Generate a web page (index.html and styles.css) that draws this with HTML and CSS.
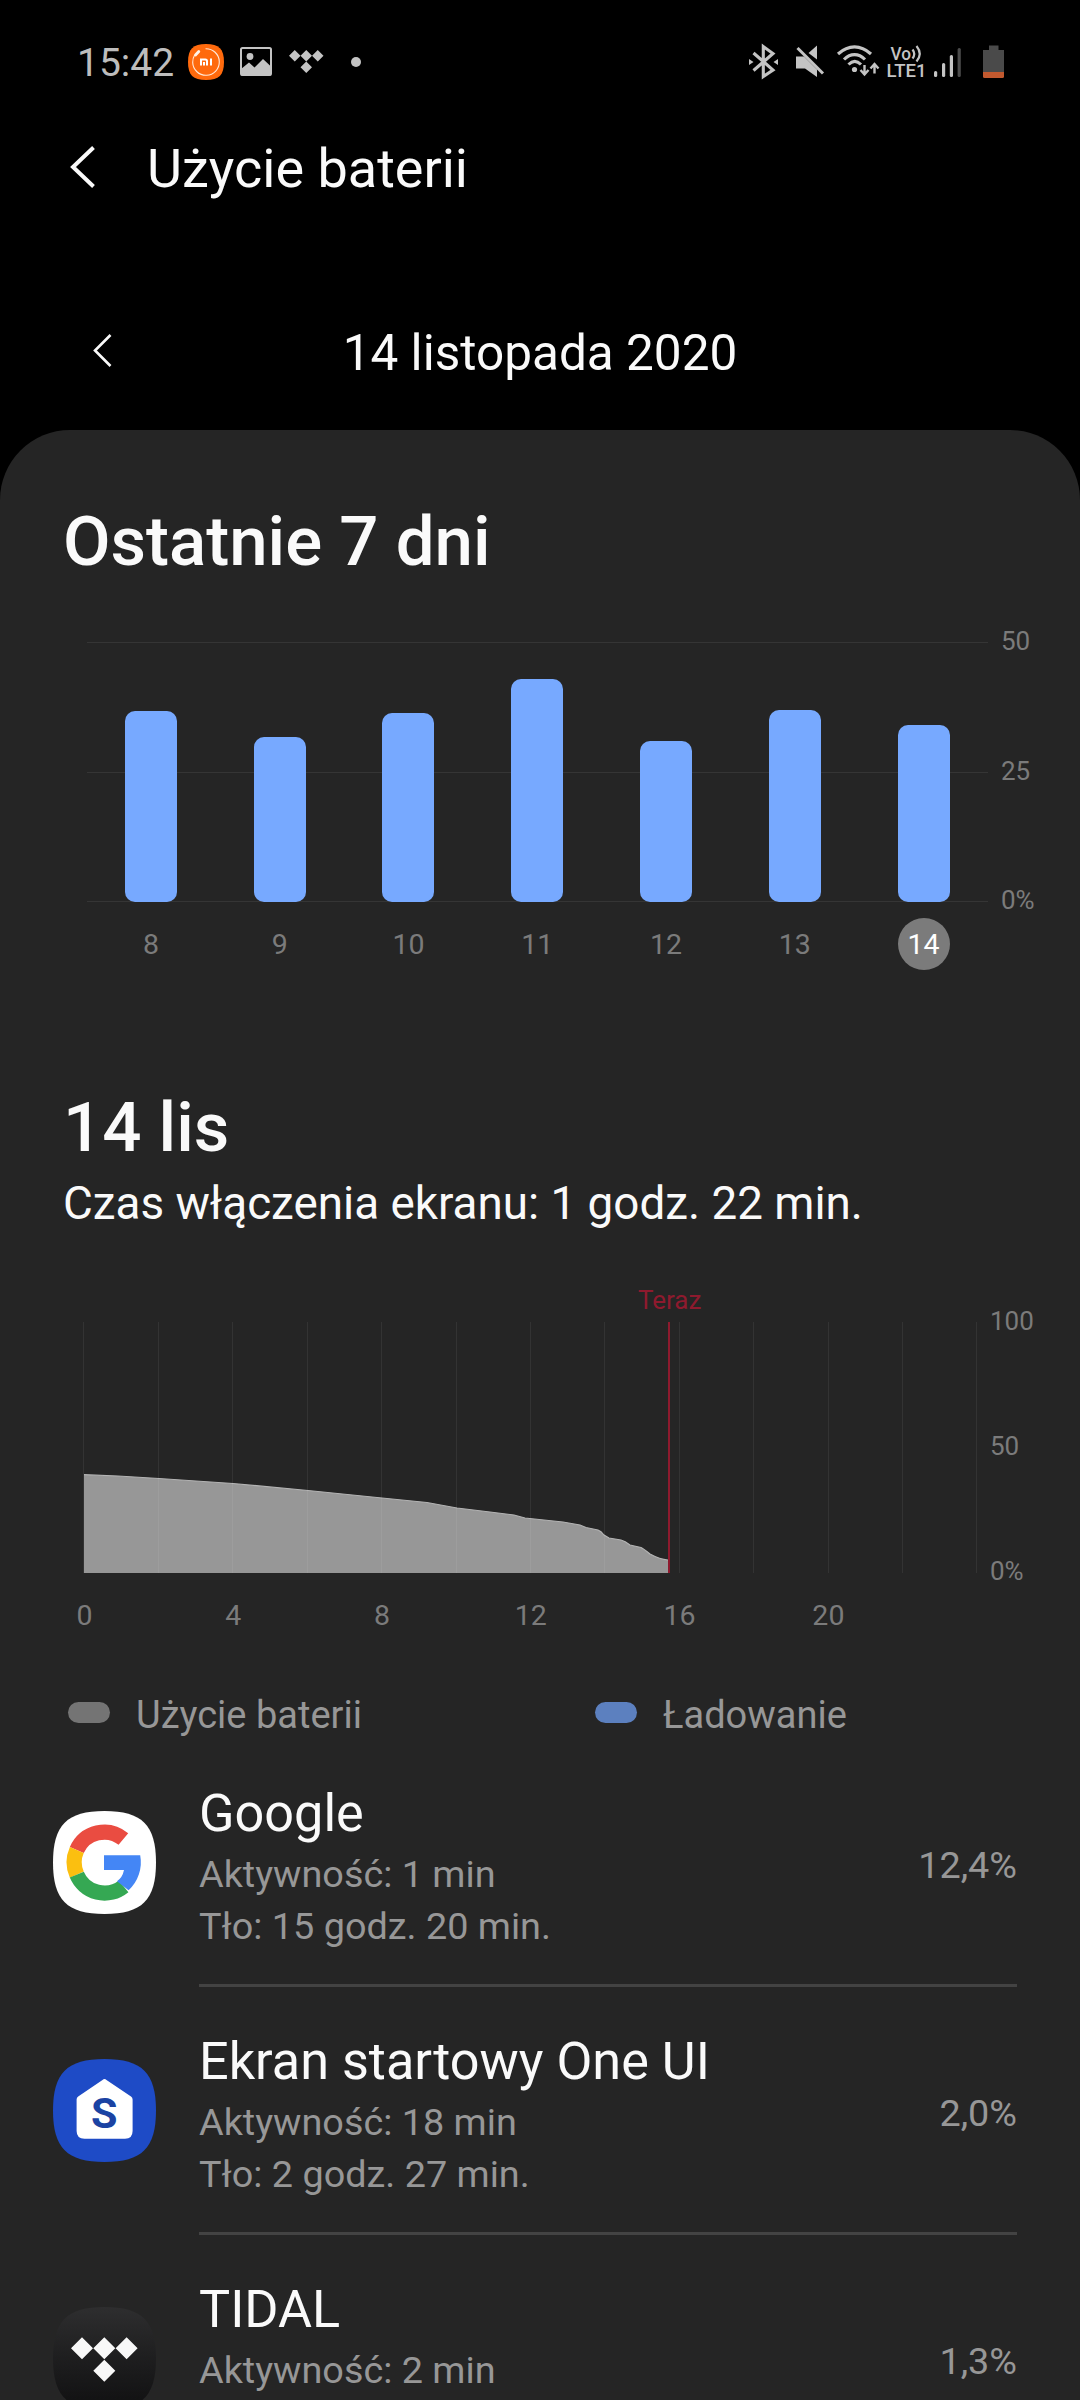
FILE: index.html
```html
<!DOCTYPE html>
<html lang="pl">
<head>
<meta charset="utf-8">
<title>Użycie baterii</title>
<link rel="stylesheet" href="styles.css">
</head>
<body>
<div class="screen">
  <header class="status">
    <div class="status-left">
      <span class="clock">15:42</span>
      <svg class="ic-mi" width="36" height="36" viewBox="0 0 36 36"><path d="M18 0C31 0 36 5 36 18S31 36 18 36 0 31 0 18 5 0 18 0Z" fill="#ff6a0d"/><circle cx="18" cy="18" r="13.3" fill="none" stroke="#ffe9d8" stroke-width="1.1" stroke-dasharray="70 13.6" transform="rotate(-92 18 18)"/><path d="M7.500 11 10.800 7.500" stroke="#fff3e8" stroke-width="2.800" stroke-linecap="round"/><path d="M13 21.500v-6h4.300q1.700 0 1.700 1.700V21.500M16 21.500v-3.500M23 14.500V21.500" fill="none" stroke="#fff" stroke-width="2"/></svg>
      <svg class="ic-pic" width="32" height="30" viewBox="0 0 32 30"><rect x="1" y="1" width="30" height="27" rx="1.5" fill="none" stroke="#c4c4c4" stroke-width="2"/><circle cx="10" cy="9.5" r="3.4" fill="#c4c4c4"/><path d="M1 22 9 15.5 14.5 20.500 23 12 31 19.500V28.500H1Z" fill="#c4c4c4"/></svg>
      <svg class="ic-tidal" width="34.500" height="23" viewBox="0 0 36 24"><path d="M6 0l6 6-6 6-6-6ZM18 0l6 6-6 6-6-6ZM30 0l6 6-6 6-6-6ZM18 12l6 6-6 6-6-6Z" fill="#c4c4c4"/></svg>
      <span class="dot"></span>
    </div>
    <svg class="status-right" width="260" height="50" viewBox="745 36 260 50">
      <g fill="none" stroke="#c4c4c4" stroke-width="3.100">
        <path d="M753.500 53 773 70 763.300 76.500V46.500L773 53.500 753.500 70.500"/>
        <path d="M838 54C848.500 44.500 860.500 44.500 871 54M844 59.500C850.500 53 858.500 53 865 59.500M848.500 64.500C852.500 60.500 857 60.500 861 64.500"/>
        <path d="M864.500 65V73.500M860.500 70 864.500 74.500 868.500 70M874.500 73.500V65M870.500 68.500 874.500 64 878.500 68.500" stroke-width="2.400"/>
      </g>
      <g fill="#c4c4c4">
        <path d="M749 59 753.500 62 749 65ZM778 59 773.500 62 778 65Z"/>
        <path d="M796 56.500H804L817 69.500V77L805 68.500H796ZM808.500 53 817 45.500V59.500Z"/>
        <circle cx="854.500" cy="69.500" r="2.600"/>
        <rect x="934" y="71" width="3.200" height="6" rx="1.500"/>
        <rect x="942" y="63" width="3.200" height="14" rx="1.500"/>
        <rect x="949.800" y="55" width="3.200" height="22" rx="1.500"/>
        <rect x="957.600" y="48" width="3.200" height="29" rx="1.500" fill="#4b4b4b"/>
      </g>
      <path d="M797.500 48 823 73.500" stroke="#c4c4c4" stroke-width="3"/>
      <text x="890.500" y="59.500" class="volte" textLength="20.500" lengthAdjust="spacingAndGlyphs">Vo</text>
      <path d="M912.500 49.500Q916 54 912.500 58.500M916.500 46Q923 54 916.500 61.500" fill="none" stroke="#c4c4c4" stroke-width="2.200"/>
      <text x="886.500" y="77" class="volte" textLength="40" lengthAdjust="spacingAndGlyphs">LTE1</text>
      <path d="M989 45.500H998.500V50H1004V72H983V50H989Z" fill="#4a4a4a"/>
      <path d="M983 72H1004V76.500Q1004 78 1002.500 78H984.500Q983 78 983 76.500Z" fill="#c2592f"/>
    </svg>
  </header>

  <nav class="titlebar">
    <svg width="26" height="42" viewBox="0 0 26 42"><path d="M23.500 1.500 3 21 23.500 40.500" fill="none" stroke="#fafafa" stroke-width="4"/></svg>
    <h1>Użycie baterii</h1>
  </nav>

  <div class="datebar">
    <svg width="20" height="34" viewBox="0 0 20 34"><path d="M17.500 1 2 16.500 17.500 32" fill="none" stroke="#fafafa" stroke-width="2.600"/></svg>
    <span>14 listopada 2020</span>
  </div>

  <main class="sheet">
    <h2>Ostatnie 7 dni</h2>
    <section class="week">
      <div class="week-plot">
        <div class="bars">
          <div class="col"><i style="height:191px"></i></div>
          <div class="col"><i style="height:165px"></i></div>
          <div class="col"><i style="height:189px"></i></div>
          <div class="col"><i style="height:223px"></i></div>
          <div class="col"><i style="height:161px"></i></div>
          <div class="col"><i style="height:192px"></i></div>
          <div class="col"><i style="height:177px"></i></div>
        </div>
        <div class="days"><span>8</span><span>9</span><span>10</span><span>11</span><span>12</span><span>13</span><span><b>14</b></span></div>
      </div>
      <div class="scale week-scale"><span>50</span><span>25</span><span>0%</span></div>
    </section>

    <h2 class="day-title">14 lis</h2>
    <p class="screen-time">Czas włączenia ekranu: 1 godz. 22 min.</p>

    <section class="day">
      <div class="day-plot">
        <span class="now">Teraz</span>
        <svg width="896" height="252" viewBox="83 1322 896 252">
          <path d="M84 1573V1474.700L118 1476 159 1478.500 233 1483.500 308 1490.500 382 1498 427 1502.500 457 1508 490 1512 514 1515 525 1518 563 1522 580 1525 586 1527.500 598 1530 Q601 1531 604 1535L609 1538 621 1540Q625 1541 630 1545L641 1547.500Q644 1549 650 1554 660 1559.500 668 1560V1573Z" fill="#979797"/>
          <path d="M84 1474.700 118 1476 159 1478.500 233 1483.500 308 1490.500 382 1498 427 1502.500 457 1508 490 1512 514 1515 525 1518 563 1522 580 1525 586 1527.500 598 1530 Q601 1531 604 1535L609 1538 621 1540Q625 1541 630 1545L641 1547.500Q644 1549 650 1554 660 1559.500 668 1560" fill="none" stroke="#b4b4b4" stroke-width="1.200"/>
          <path class="grid" d="M83.500 1322V1573M158.500 1322V1573M232.500 1322V1573M307.500 1322V1573M381.500 1322V1573M456.500 1322V1573M530.500 1322V1573M604.500 1322V1573M679.500 1322V1573M753.500 1322V1573M828.500 1322V1573M902.500 1322V1573M976.500 1322V1573"/>
          <path d="M669 1322V1573" stroke="#8e1a2e" stroke-width="2"/>
        </svg>
        <div class="hours"><span>0</span><span>4</span><span>8</span><span>12</span><span>16</span><span>20</span></div>
      </div>
      <div class="scale day-scale"><span>100</span><span>50</span><span>0%</span></div>
    </section>

    <div class="legend">
      <span><i></i>Użycie baterii</span>
      <span><i class="blue"></i>Ładowanie</span>
    </div>

    <ul class="apps">
      <li>
        <svg class="app-icon" width="103" height="103" viewBox="0 0 103 103"><path d="M51.500 0C89 0 103 14 103 51.500S89 103 51.500 103 0 89 0 51.500 14 0 51.500 0Z" fill="#fff"/>
          <g fill="none" stroke-width="15.200"><path d="M70.400 28A30.100 30.100 0 0 0 23.800 39" stroke="#ea4c41"/><path d="M23.800 39A30.100 30.100 0 0 0 23.800 63.600" stroke="#fbbf10"/><path d="M23.800 63.600A30.100 30.100 0 0 0 70.600 75.300" stroke="#35a853"/></g>
          <path d="M51 44.300H87.200A38 38 0 0 1 75.600 79.200L64 70.200Q69.500 66.500 71 59H51Z" fill="#4486f5"/></svg>
        <div class="app-body"><div><h3>Google</h3><p>Aktywność: 1 min</p><p>Tło: 15 godz. 20 min.</p></div><em>12,4%</em></div>
      </li>
      <li>
        <svg class="app-icon" width="103" height="103" viewBox="0 0 103 103"><path d="M51.500 0C89 0 103 14 103 51.500S89 103 51.500 103 0 89 0 51.500 14 0 51.500 0Z" fill="#1e4bc6"/><path d="M49.500 21Q51.500 19 53.500 21L78 37.500Q79.600 38.500 79.600 40.500V72Q79.600 79.700 72 79.700H31.500Q23.600 79.700 23.600 72V40.500Q23.600 38.500 25.200 37.500Z" fill="#fff"/><text x="51.300" y="68.800" class="s-mark">S</text></svg>
        <div class="app-body"><div><h3>Ekran startowy One UI</h3><p>Aktywność: 18 min</p><p>Tło: 2 godz. 27 min.</p></div><em>2,0%</em></div>
      </li>
      <li>
        <svg class="app-icon" width="103" height="103" viewBox="0 0 103 103"><defs><linearGradient id="tg" x2="0" y2="1"><stop stop-color="#2e2e2f"/><stop offset=".5" stop-color="#1e1e1f"/><stop offset="1" stop-color="#101011"/></linearGradient></defs><path d="M51.500 0C89 0 103 14 103 51.500S89 103 51.500 103 0 89 0 51.500 14 0 51.500 0Z" fill="url(#tg)"/><path d="M29 30.300l11 11-11 11-11-11ZM51.300 30.300l11 11-11 11-11-11ZM73.600 30.300l11 11-11 11-11-11ZM51.300 52.700l11 11-11 11-11-11Z" fill="#f8f8f8"/></svg>
        <div class="app-body"><div><h3>TIDAL</h3><p>Aktywność: 2 min</p></div><em>1,3%</em></div>
      </li>
    </ul>
  </main>
</div>
</body>
</html>
```
FILE: styles.css
```css
* { box-sizing: border-box; margin: 0; padding: 0; }
body { background: #000; }
.screen {
  width: 1080px; height: 2400px; overflow: hidden;
  display: flex; flex-direction: column;
  background: #000; color: #fafafa;
  font-family: Roboto, sans-serif; font-weight: 400;
}
h1, h3, em { font-weight: 400; font-style: normal; }
svg { display: block; flex: none; }

.status { height: 124px; padding: 36px 75px 0 77px; display: flex; justify-content: space-between; align-items: flex-start; flex: none; }
.status-left { display: flex; align-items: center; height: 51px; }
.clock { font-size: 39px; line-height: 40px; color: #bdbdbd; width: 111px; padding-top: 3px; }
.ic-pic { margin-left: 16px; }
.ic-tidal { margin-left: 17px; }
.dot { width: 10px; height: 10px; border-radius: 50%; background: #c4c4c4; margin-left: 27px; }
.volte { font-size: 17.500px; font-weight: 500; fill: #c4c4c4; font-family: Roboto, sans-serif; }

.titlebar { height: 88px; display: flex; align-items: center; padding-left: 70px; gap: 51px; flex: none; }
.titlebar svg { margin-bottom: 3px; }
.titlebar h1 { font-size: 54px; line-height: 64px; padding-top: 2px; }

.datebar { height: 218px; display: grid; grid-template-columns: 94px 1fr 94px; padding-top: 111px; flex: none; }
.datebar svg { margin: 11px 0 0 93px; }
.datebar span { font-size: 49.500px; line-height: 60px; text-align: center; }

.sheet { flex: none; height: 1970px; background: #252525; border-radius: 70px 70px 0 0; padding-top: 72px; }
h2 { font-size: 69px; line-height: 80px; font-weight: 500; padding-left: 63px; }

.week { display: flex; padding: 60px 0 0 86.500px; height: 388px; }
.week-plot { width: 901.500px; }
.bars {
  height: 260px; display: grid; grid-template-columns: repeat(7, 1fr);
  background: linear-gradient(#353535, #353535) 0 0 / 100% 1px no-repeat, linear-gradient(#353535, #353535) 0 130px / 100% 1px no-repeat, linear-gradient(#353535, #353535) 0 259px / 100% 1px no-repeat;
}
.col { display: flex; align-items: flex-end; justify-content: center; }
.col i { width: 52px; border-radius: 10px; background: #77a9ff; }
.days { display: grid; grid-template-columns: repeat(7, 1fr); padding-top: 16px; font-size: 28.500px; line-height: 54px; color: #7b7b7b; text-align: center; }
.days b { display: block; width: 52px; height: 52px; margin: 0 auto; border-radius: 50%; background: #7b7b7b; color: #fff; font-weight: 400; }
.scale { display: flex; flex-direction: column; justify-content: space-between; font-size: 26px; line-height: 30px; color: #7b7b7b; }
.week-scale { height: 289px; margin: -16px 0 0 13px; }

.day-title { margin-top: 118px; }
.screen-time { font-size: 45.800px; line-height: 56px; padding: 8px 0 0 63px; }

.day { display: flex; padding-left: 83px; margin-top: 53px; }
.day-plot { width: 896px; }
.now { display: block; width: 60px; margin-left: 555px; height: 37px; font-size: 26px; line-height: 30px; color: #8e1a2e; }
.grid { fill: none; stroke: #fff; stroke-opacity: .065; }
.hours { display: flex; margin: 25px 0 0 -73px; font-size: 28.500px; line-height: 34px; color: #7b7b7b; }
.hours span { width: 148.800px; text-align: center; }
.day-scale { height: 280px; margin: 21px 0 0 11px; }

.legend { display: grid; grid-template-columns: 527px 1fr; padding-left: 68px; margin-top: 59px; font-size: 38px; line-height: 46px; color: #979797; }
.legend span { display: flex; align-items: center; }
.legend i { width: 42px; height: 21px; border-radius: 11px; background: #747474; margin: 0 26px 5px 0; }
.legend .blue { background: #5c80bf; }

.apps { list-style: none; padding: 0 63px 0 53px; margin-top: 42px; }
.apps li { display: flex; height: 248px; }
.app-icon { margin: 31px 43px 0 0; }
.app-body { flex: 1; display: flex; justify-content: space-between; border-bottom: 3px solid #434343; height: 207px; }
.app-body h3 { font-size: 52.200px; line-height: 68px; }
.app-body p, .app-body em { font-size: 37.800px; line-height: 52px; color: #979797; }
.app-body em { margin-top: 59px; }
.s-mark { font-size: 43px; font-weight: 700; fill: #1b43a3; text-anchor: middle; font-family: Roboto, sans-serif; }
```
